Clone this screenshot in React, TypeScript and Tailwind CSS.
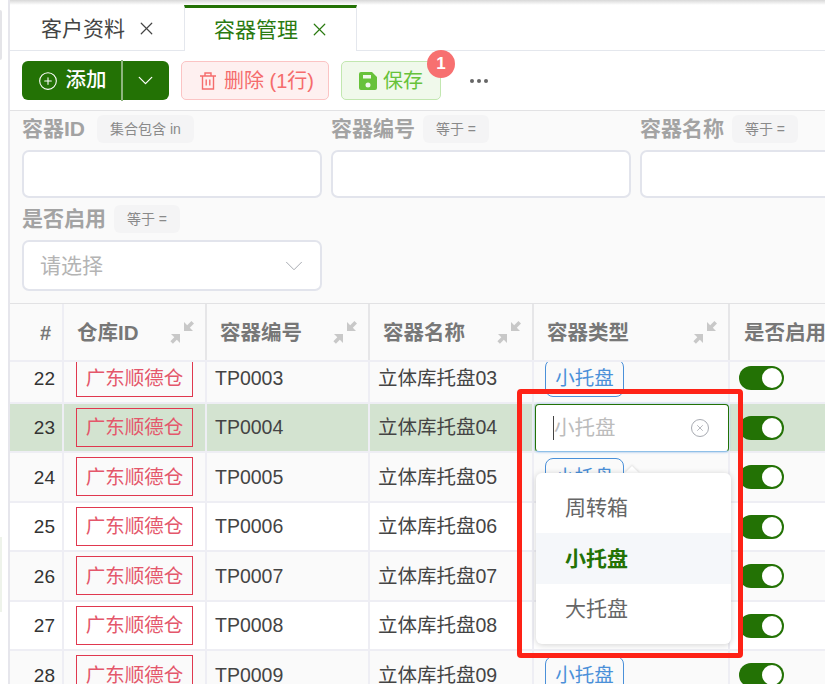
import React from 'react';
import { ChevronDown, CirclePlus, X } from 'lucide-react';

const rows = [22, 23, 24, 25, 26, 27, 28];

const TrashIcon = () => (
  <svg width="18" height="20" viewBox="0 0 18 20" fill="none" stroke="#f56c6c" strokeWidth="1.4">
    <path d="M1 5h16M6 5V2h6v3M3.5 5v13h11V5M7.2 8.5v6M10.8 8.5v6" />
  </svg>
);

const SaveIcon = () => (
  <svg width="18" height="18" viewBox="0 0 18 18">
    <path
      fill="#67c23a"
      fillRule="evenodd"
      d="M2 0h11l5 5v11a2 2 0 0 1-2 2H2a2 2 0 0 1-2-2V2a2 2 0 0 1 2-2Zm2 3v3.5h8V3H4Zm5 7.5a2.5 2.5 0 1 0 0 5 2.5 2.5 0 0 0 0-5Z"
    />
  </svg>
);

const CompressIcon = () => (
  <svg width="24" height="24" viewBox="0 0 24 24" fill="#c8c8c8">
    <path d="M14 2v9h9l-3.2-3.2L24 3.6 21.4 1l-4.2 4.2L14 2Z" />
    <path d="M1 14h9v9l-3.2-3.2-3.9 3.9L.4 21.2l3.9-3.9L1 14Z" />
  </svg>
);

const FilterField = ({
  label,
  op,
  tagClass,
  children,
}: {
  label: string;
  op: string;
  tagClass: string;
  children?: React.ReactNode;
}) => (
  <div className="flex flex-col">
    <div className="flex h-[28px] items-center">
      <span className="text-[21px] font-bold text-[#a3a3a3]">{label}</span>
      <span className={`flex h-[28px] items-center justify-center rounded-[6px] bg-[#f4f4f5] text-[14px] text-[#8a8a8a] ${tagClass}`}>{op}</span>
    </div>
    {children ?? <div className="mt-[7px] h-[48px] rounded-[7px] border-2 border-[#e2e4ec] bg-white" />}
  </div>
);

const HeaderCell = ({ title, className }: { title: string; className: string }) => (
  <div className={`flex items-center justify-between border-r-2 border-[#e6e6e8] pl-[13px] pr-[11px] ${className}`}>
    <span className="pt-[3px] text-[20.5px] font-bold text-[#777777]">{title}</span>
    <CompressIcon />
  </div>
);

const Row = ({ n }: { n: number }) => {
  const active = n === 23;
  const bg = active ? 'bg-[#d3e3d0]' : n % 2 === 0 ? 'bg-[#fafafa]' : 'bg-white';
  const cell = 'flex h-full items-center border-r-2 border-[#eeeef4]';
  const code = String(n - 19).padStart(4, '0');
  return (
    <div className={`flex h-[49.5px] items-center border-b-2 border-[#eeeef4] text-[19.5px] leading-none text-[#444444] ${bg}`}>
      <div className={`${cell} w-[54px] justify-end pr-[7px] text-[19px] text-[#333333]`}>
        <span className="pt-[1px]">{n}</span>
      </div>
      <div className={`${cell} w-[143px] pl-[12px]`}>
        <span className="flex h-[39px] w-[117px] items-center justify-center border border-[#e0384f] pt-[1px] text-[#e4576b]">广东顺德仓</span>
      </div>
      <div className={`${cell} w-[163px] pl-[8px]`}>
        <span className="pt-[1px]">TP{code}</span>
      </div>
      <div className={`${cell} w-[164px] pl-[8px]`}>
        <span className="pt-[1px]">立体库托盘{code.slice(2)}</span>
      </div>
      <div className={`${cell} w-[196px] pl-[11px]`}>
        <span className="flex h-[38px] w-[79px] items-center justify-center rounded-[8px] border border-[#4a90d9] pt-[1px] text-[#4a90d9]">小托盘</span>
      </div>
      <div className="flex h-full w-[120px] items-center pl-[9px]">
        <span className="mt-[1px] flex h-[24px] w-[45px] items-center justify-end rounded-full bg-[#237205] pr-[2px]">
          <span className="h-[20px] w-[20px] rounded-full bg-white" />
        </span>
      </div>
    </div>
  );
};

export default function App() {
  return (
    <div className="relative flex h-[684px] w-[825px] overflow-hidden bg-white font-['Liberation_Sans','Noto_Sans_CJK_SC',sans-serif]">
      <div className="h-full w-[10px] shrink-0 border-r-2 border-[#e6e6ec] bg-white">
        <div className="mt-[10px] h-[50px] w-[2px] rounded-r bg-[#e4e4e8]" />
        <div className="mt-[477px] h-[75px] w-[2px] bg-[#eef3ea]" />
      </div>

      <div className="flex h-full w-[900px] shrink-0 flex-col">
        <div className="h-[5px] bg-gradient-to-b from-[#d8d8d8] to-white" />

        {/* tabs */}
        <div className="flex h-[46px] border-b border-[#e4e7ed]">
          <div className="flex w-[174px] items-center pl-[31px] pt-[2px] text-[21px] text-[#444444]">
            客户资料
            <X size={21} strokeWidth={1.4} className="ml-[11px]" />
          </div>
          <div className="-mb-px flex w-[173px] items-center border-x border-t-[3px] border-x-[#e4e7ed] border-t-[#237205] bg-white pl-[29px] text-[21px] text-[#2a7a10]">
            容器管理
            <X size={21} strokeWidth={1.4} className="ml-[11px]" />
          </div>
        </div>

        {/* toolbar */}
        <div className="flex h-[59px] items-center pl-[12px]">
          <div className="flex h-[39px] w-[147px] items-center rounded-[6px] bg-[#237205] text-white">
            <div className="flex h-full w-[99px] items-center justify-center gap-[8px] pl-[1px] text-[20.5px] font-medium">
              <CirclePlus size={20} strokeWidth={1.3} />
              添加
            </div>
            <div className="h-[41px] w-[1.5px] bg-[#8fb57f]" />
            <div className="flex flex-1 items-center justify-center">
              <ChevronDown size={25} strokeWidth={1.2} />
            </div>
          </div>
          <div className="ml-[12px] flex h-[39px] w-[148px] items-center justify-center gap-[7px] rounded-[5px] border border-[#fbc4c4] bg-[#fef0f0] pl-[3px] text-[20px] text-[#f56c6c]">
            <TrashIcon />
            删除 (1行)
          </div>
          <div className="relative ml-[12px] flex h-[39px] w-[100px] items-center justify-center gap-[6px] rounded-[5px] border border-[#c2e7b0] bg-[#f0f9eb] text-[20px] text-[#67c23a]">
            <SaveIcon />
            保存
            <span className="absolute right-[-15px] top-[-12px] flex h-[28px] w-[28px] items-center justify-center rounded-full bg-[#f77070] text-[17px] font-bold text-white">
              1
            </span>
          </div>
          <div className="ml-[29px] flex gap-[3px]">
            <span className="h-[4px] w-[4px] rounded-full bg-[#666666]" />
            <span className="h-[4px] w-[4px] rounded-full bg-[#666666]" />
            <span className="h-[4px] w-[4px] rounded-full bg-[#666666]" />
          </div>
        </div>

        {/* filters */}
        <div className="h-[194px] border-y border-[#e2e2e4] bg-[#fafafa] pl-[12px] pt-[4px]">
          <div className="grid w-[918px] grid-cols-[300px_300px_300px] gap-x-[9px] gap-y-[7px]">
            <FilterField label="容器ID" op="集合包含 in" tagClass="ml-[12px] w-[97px]" />
            <FilterField label="容器编号" op="等于 =" tagClass="ml-[8px] w-[66px]" />
            <FilterField label="容器名称" op="等于 =" tagClass="ml-[8px] w-[66px]" />
            <FilterField label="是否启用" op="等于 =" tagClass="ml-[8px] w-[66px]">
              <div className="mt-[7px] flex h-[51px] items-center justify-between rounded-[7px] border-2 border-[#e2e4ec] bg-white pl-[16px] pr-[11px] text-[21px] text-[#b4b4b4]">
                请选择
                <ChevronDown size={30} strokeWidth={0.8} className="text-[#a8abb2]" />
              </div>
            </FilterField>
          </div>
        </div>

        {/* table head */}
        <div className="flex h-[58px] shrink-0 border-b-2 border-[#eeeef4] bg-[#fafafa]">
          <div className="flex w-[54px] items-center justify-end border-r-2 border-[#eeeef4] pr-[11px] pt-[1px] text-[20px] font-bold text-[#777777]">#</div>
          <HeaderCell title="仓库ID" className="w-[143px]" />
          <HeaderCell title="容器编号" className="w-[163px]" />
          <HeaderCell title="容器名称" className="w-[164px]" />
          <HeaderCell title="容器类型" className="w-[196px]" />
          <div className="flex w-[120px] items-center pl-[14px] pt-[3px] text-[20.5px] font-bold text-[#777777]">是否启用</div>
        </div>

        {/* table body, scrolled */}
        <div className="min-h-0 flex-1 overflow-hidden">
          <div className="-mt-[8px]">
            {rows.map((n) => (
              <Row key={n} n={n} />
            ))}
          </div>
        </div>
      </div>

      {/* cell editor and its dropdown */}
      <div className="absolute left-[535px] top-[404px] flex h-[48px] w-[194px] items-center justify-between rounded-[4px] border border-[#237205] border-b-[#8fc0e8] bg-white pl-[17px] pr-[19px] text-[20.5px] text-[#bcbcbc] shadow-[0_0_3px_#9cc7ee]">
        <span className="border-l border-[#444444] leading-[24px]">小托盘</span>
        <span className="flex h-[18px] w-[18px] items-center justify-center rounded-full border-[1.5px] border-[#a8abb2]">
          <X size={10} strokeWidth={2} className="text-[#a8abb2]" />
        </span>
      </div>
      <div className="absolute left-[627px] top-[468px] h-[10px] w-[10px] rotate-45 bg-white shadow-[-1px_-1px_2px_#e4e4e4]" />
      <div className="absolute left-[536px] top-[473px] w-[195px] rounded-[6px] bg-white py-[10px] text-[21px] text-[#666666] shadow-[0_1px_6px_rgba(0,0,0,0.18)]">
        <div className="flex h-[50px] items-center pl-[29px]">周转箱</div>
        <div className="flex h-[51px] items-center bg-[#f5f7fa] pl-[29px] font-bold text-[#237205]">小托盘</div>
        <div className="flex h-[50px] items-center pl-[29px]">大托盘</div>
      </div>

      {/* red annotation frame */}
      <div className="pointer-events-none absolute left-[517px] top-[389px] h-[269px] w-[226px] rounded-[4px] border-[5px] border-[#fe2216]" />
    </div>
  );
}
